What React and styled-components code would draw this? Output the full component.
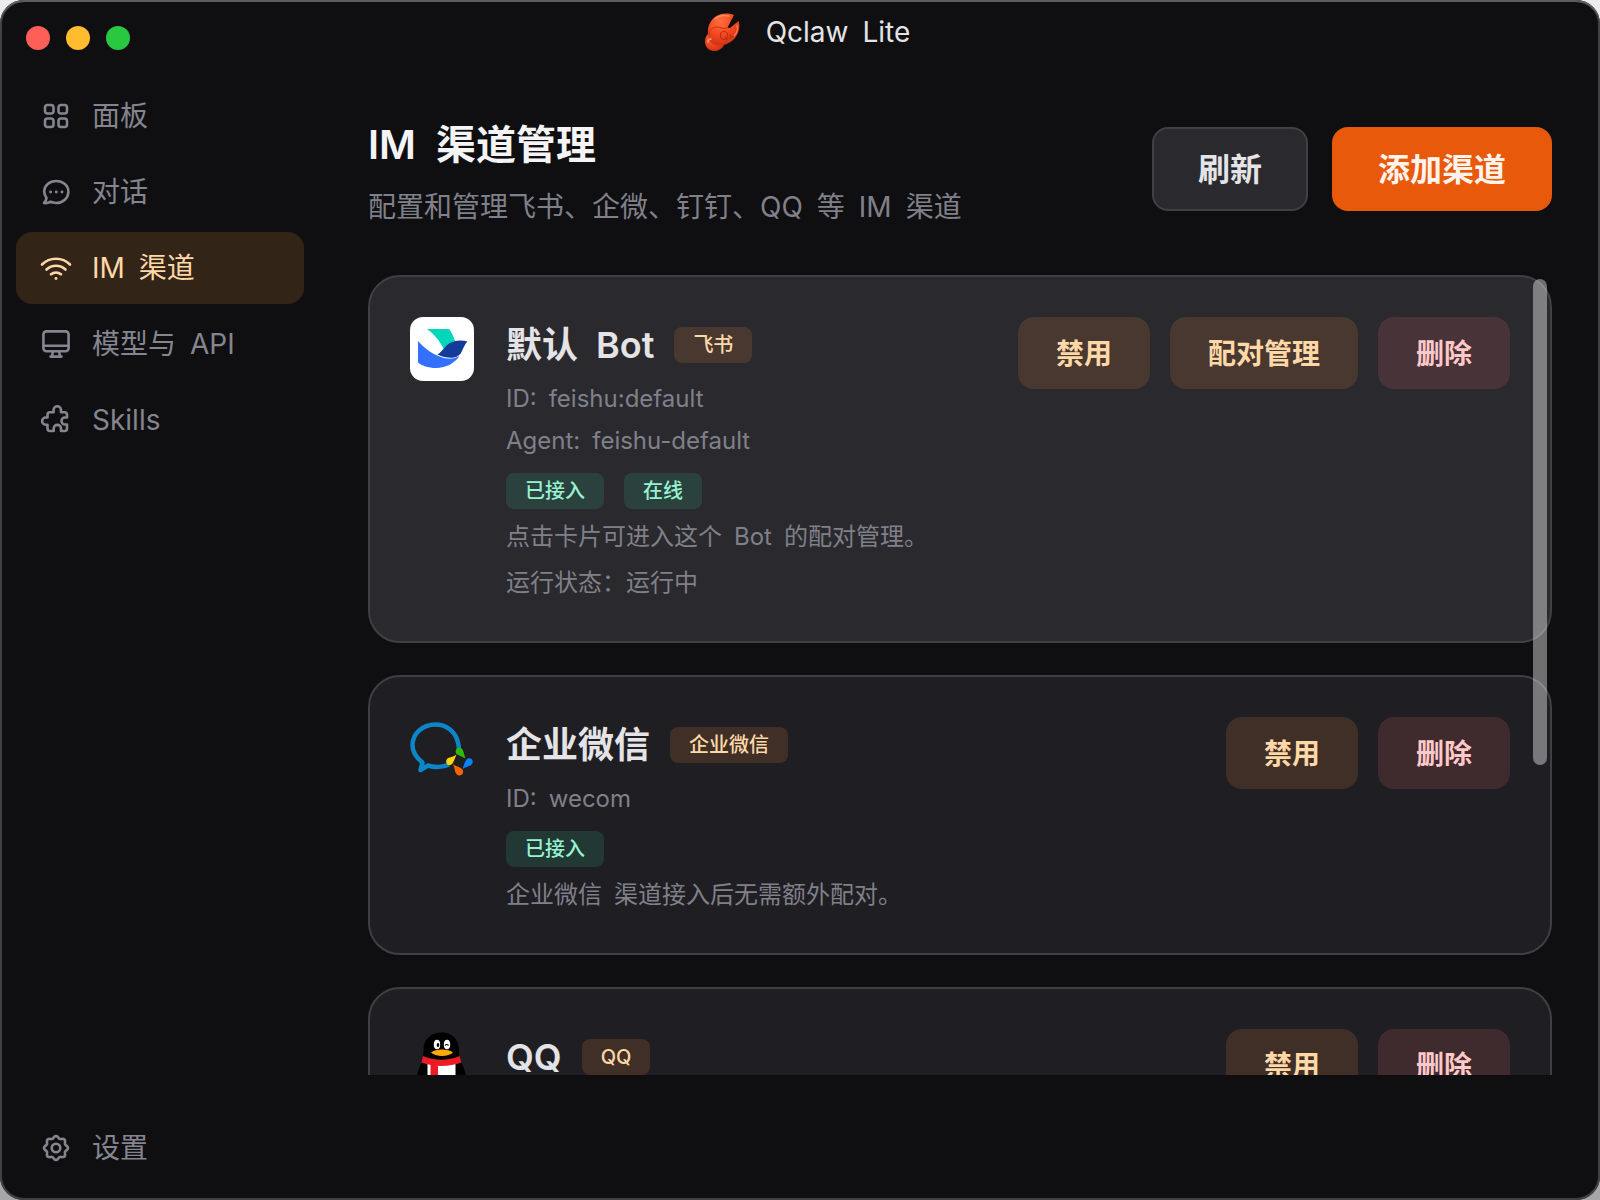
import styled, { createGlobalStyle } from "styled-components";

const GridIcon = () => (
    <>
        <rect x="5" y="5" width="8.500" height="8.500" rx="2.500" />
        <rect x="18.500" y="5" width="8.500" height="8.500" rx="2.500" />
        <rect x="5" y="18.500" width="8.500" height="8.500" rx="2.500" />
        <rect x="18.500" y="18.500" width="8.500" height="8.500" rx="2.500" />
    </>
);

const ChatIcon = () => (
    <>
        <path d="M6.500 22C5 20 4.200 18 4.200 15.500C4.200 9.500 9.500 5 16.300 5C23 5 28.400 9.500 28.400 15.800C28.400 22 23 27 16.300 27C14 27 12 26.500 10.500 25.700C9 26.700 6.500 27.300 4 27C5.500 25.500 6.300 24 6.500 22Z" />
        <path d="M10.500 16H10.600M16.200 16H16.300M21.900 16H22" strokeWidth="2.800" />
    </>
);

const WifiIcon = () => (
    <>
        <path d="M2 12.500A20 20 0 0 1 30 12.500" />
        <path d="M6.500 17.500A14 14 0 0 1 25.500 17.500" />
        <path d="M11 22.300A8 8 0 0 1 21 22.300" />
        <circle cx="16" cy="26.500" r="1.400" fill="currentColor" stroke="none" />
    </>
);

const DesktopIcon = () => (
    <>
        <rect x="3.400" y="3.400" width="25.200" height="19.800" rx="3" />
        <path d="M3.400 17.800H28.600M13 23.500L12 28M19 23.500L20 28M10.500 28.600H21.500" />
    </>
);

const PuzzleIcon = () => (
    <path d="M7.500 10.700Q7.500 8.200 10 8.200H13.600V6A3.700 3.700 0 0 1 21 6V8.200H24.500Q27 8.200 27 10.700V13.500H25A3.500 3.500 0 0 0 25 20.500H27V24.500Q27 27 24.500 27H21V24.500A3.650 3.650 0 0 0 13.700 24.500V27H10Q7.500 27 7.500 24.500V20.700H5.700A3.600 3.600 0 0 1 5.700 13.500H7.500Z" />
);

// eight rounded teeth around the hub
const gearPoints = Array.from({ length: 96 }, (_, i) => {
    const angle = (i / 96) * Math.PI * 2;
    const radius = 10.9 + 1.1 * Math.cos(angle * 8);
    return `${(16 + radius * Math.cos(angle)).toFixed(2)},${(16 + radius * Math.sin(angle)).toFixed(2)}`;
}).join(" ");

const GearIcon = () => (
    <>
        <polygon points={gearPoints} />
        <circle cx="16" cy="16" r="4.300" />
    </>
);

const NavIcon = ({ children }) => (
    <svg
        width="32"
        height="32"
        viewBox="0 0 32 32"
        fill="none"
        stroke="currentColor"
        strokeWidth="2.600"
        strokeLinecap="round"
        strokeLinejoin="round"
        aria-hidden="true"
    >
        {children}
    </svg>
);

// \u2002 is the wide gap between Latin and Chinese words
const navItems = [
    { icon: GridIcon, label: "面板" },
    { icon: ChatIcon, label: "对话" },
    { icon: WifiIcon, label: "IM\u2002渠道", active: true },
    { icon: DesktopIcon, label: "模型与\u2002API" },
    { icon: PuzzleIcon, label: "Skills" },
];

const ClawIcon = () => (
    <svg width="56" height="56" viewBox="0 0 56 56" aria-hidden="true">
        <defs>
            <radialGradient id="claw" cx="0.4" cy="0.25" r="0.85">
                <stop offset="0" stopColor="#ff7040" />
                <stop offset="0.5" stopColor="#f4481f" />
                <stop offset="1" stopColor="#c42c12" />
            </radialGradient>
        </defs>
        <path
            d="M21 28C17 30 15 33 15 38C15 43 19 47 24 47C28 47 32 45 34 41Z"
            fill="url(#claw)"
        />
        <path
            d="M44 11C39 8.500 30 9 25 13C20 17 17.500 23 18 29C18 35 20 39 25 41C31 43 40 40 45 34C49 29 50.500 22 48.500 17L40 24L37.500 23.500Z"
            fill="url(#claw)"
        />
        <path d="M25 15C29 11 34 11 39 12" stroke="#ffa27c" strokeWidth="1.500" fill="none" strokeLinecap="round" opacity="0.7" />
        <path d="M19 31C19 26 23 23 27 23C31 23 33 26 37.500 23.500" stroke="#c9330f" strokeWidth="1" fill="none" />
        <path d="M47 21C48 25 47 29 44 32" stroke="#ff7d50" strokeWidth="1.200" fill="none" strokeLinecap="round" />
        <ellipse cx="34" cy="31.500" rx="3.600" ry="4" fill="none" stroke="#b8300f" strokeWidth="1.100" />
        <path d="M35 33L37.500 36M40.500 30L40 34L43.500 32" stroke="#b8300f" strokeWidth="1.100" fill="none" />
        <path d="M18 38C18 36 19 35 21 35" stroke="#ffa27c" strokeWidth="1.500" fill="none" strokeLinecap="round" />
    </svg>
);

const FeishuLogo = () => (
    <svg width="64" height="64" viewBox="0 0 64 64" aria-hidden="true">
        <rect width="64" height="64" rx="13" fill="#fff" />
        <path d="M17 12H38.500C40 12 43 18 45.500 25C41 25.500 37.500 29 34 32.500C30 24 24 17 17 12Z" fill="#00d6b9" />
        <path d="M8 24C14 31 22 37 31 40C38 42.500 44 42 49.500 39C45 46 36 51 26 51C18 51 11.500 48.500 8 45.500Z" fill="#3370ff" />
        <path d="M27.500 37.500C31 35.500 33 32 37 28C42 24 50 22.500 57.500 24.500C54.500 27.500 53.500 31 51.500 35C48 42 38 42.500 27.500 37.500Z" fill="#133c9a" />
    </svg>
);

const WecomLogo = () => (
    <svg width="64" height="64" viewBox="0 0 64 64" aria-hidden="true">
        <path
            d="M48.500 35C49 32 49 29 48 25.500C45.500 14 36 7.500 25.500 7.500C12 7.500 2.500 17 2.500 28.500C2.500 34.500 5.500 40 12.500 45.500L10.500 53L18 48.500C24 50.500 33 50.500 39 47.500"
            fill="none"
            stroke="#0d86c7"
            strokeWidth="4.500"
            strokeLinejoin="round"
        />
        <path d="M46 33C47 30.500 51 30 52.500 32.500C54 35 54 38 55.500 41.500C52 39.500 48.500 38.500 46.500 37C45.500 36 45.500 34 46 33Z" fill="#2dbc0c" />
        <path d="M61.500 42C63.500 43.500 63 47 60.500 48.500C58 49.500 55.500 50 52.500 52C54 48.500 54.500 45 56.500 42.500C58 41 60.500 41 61.500 42Z" fill="#0a82f5" />
        <path d="M52.500 57C51 59 47.500 59 46 56.500C44.500 54 45 51 43 47.500C46.500 49.500 50 50 52 52C53.500 53.500 53.500 55.500 52.500 57Z" fill="#fb6500" />
        <path d="M37 47C35.500 45 36 42 38.500 41C41 40 44 39.500 46.500 37.500C45 41 44 44 42.500 46.500C41 48.500 38 48.500 37 47Z" fill="#fbd60d" />
    </svg>
);

const QQLogo = () => (
    <svg width="64" height="64" viewBox="0 0 64 64" aria-hidden="true">
        <ellipse cx="23" cy="59" rx="10" ry="4" fill="#fbaa09" />
        <ellipse cx="41" cy="59" rx="10" ry="4" fill="#fbaa09" />
        <path d="M31.500 3.500C42 3.500 49 10 49 21C49 27 50 31 52 35C55 41 57 48 55 51C54 52 52 50 50 47C49 54 42 60 31.500 60C21 60 14 54 13 47C11 50 9 52 8 51C6 48 8 41 11 35C13 31 13.500 27 13.500 21C13.500 10 21 3.500 31.500 3.500Z" fill="#000" />
        <path d="M17.500 34H45.500V46C45.500 53 40 57 31.500 57C23 57 17.500 53 17.500 46Z" fill="#fff" />
        <path d="M13 27C25 32 38 32 49.500 27L51.500 33.500C39 38 24 38 11.500 33.500Z" fill="#eb1c26" />
        <path d="M20.500 35L28 36.500V46H20.500Z" fill="#eb1c26" />
        <ellipse cx="27" cy="15.500" rx="3.200" ry="4.800" fill="#fff" />
        <ellipse cx="37" cy="15.500" rx="3.200" ry="4.800" fill="#fff" />
        <ellipse cx="28" cy="16" rx="1.300" ry="2" fill="#000" />
        <path d="M35 16.500Q36.500 14.500 38.500 16.500" stroke="#000" strokeWidth="1.200" fill="none" />
        <path d="M21 23.500C25 19.500 39 19.500 43 23.500C39 28 25 28 21 23.500Z" fill="#fbaa09" />
    </svg>
);

const channels = [
    {
        logo: FeishuLogo,
        name: "默认\u2002Bot",
        type: "飞书",
        meta: ["ID:\u2002feishu:default", "Agent:\u2002feishu-default"],
        status: ["已接入", "在线"],
        notes: ["点击卡片可进入这个\u2002Bot\u2002的配对管理。", "运行状态：运行中"],
        pairing: true,
        highlighted: true,
    },
    {
        logo: WecomLogo,
        name: "企业微信",
        type: "企业微信",
        meta: ["ID:\u2002wecom"],
        status: ["已接入"],
        notes: ["企业微信\u2002渠道接入后无需额外配对。"],
    },
    {
        logo: QQLogo,
        name: "QQ",
        type: "QQ",
        meta: [],
        status: [],
        notes: [],
    },
];

const ChannelCard = ({ channel }) => {
    const Logo = channel.logo;
    return (
        <Card $highlighted={channel.highlighted}>
            <Logo />
            <CardBody>
                <CardTitleRow>
                    <CardTitle>{channel.name}</CardTitle>
                    <Badge $tone="orange">{channel.type}</Badge>
                </CardTitleRow>
                <MetaList>
                    {channel.meta.map((line) => (
                        <MetaLine key={line}>{line}</MetaLine>
                    ))}
                </MetaList>
                <BadgeRow>
                    {channel.status.map((s) => (
                        <Badge key={s} $tone="green">{s}</Badge>
                    ))}
                </BadgeRow>
                <NoteList>
                    {channel.notes.map((line) => (
                        <MetaLine key={line}>{line}</MetaLine>
                    ))}
                </NoteList>
            </CardBody>
            <CardActions>
                <CardButton type="button" $tone="orange">禁用</CardButton>
                {channel.pairing && <CardButton type="button" $tone="orange">配对管理</CardButton>}
                <CardButton type="button" $tone="red">删除</CardButton>
            </CardActions>
        </Card>
    );
};

const App = () => {
    return (
        <>
            <GlobalStyle />
            <Window>
                <TitleBar>
                    <Lights>
                        <Light type="button" aria-label="关闭" $color="#ff5f57" />
                        <Light type="button" aria-label="最小化" $color="#febc2e" />
                        <Light type="button" aria-label="缩放" $color="#28c840" />
                    </Lights>
                    <AppName>
                        <ClawIcon />
                        {"Qclaw\u2002Lite"}
                    </AppName>
                </TitleBar>
                <Body>
                    <Sidebar>
                        {navItems.map(({ icon: Icon, label, active }) => (
                            <NavItem key={label} href="#" $active={active}>
                                <NavIcon><Icon /></NavIcon>
                                {label}
                            </NavItem>
                        ))}
                        <Spacer />
                        <NavItem href="#">
                            <NavIcon><GearIcon /></NavIcon>
                            设置
                        </NavItem>
                    </Sidebar>
                    <Main>
                        <Header>
                            <div>
                                <PageTitle>{"IM\u2002渠道管理"}</PageTitle>
                                <Subtitle>{"配置和管理飞书、企微、钉钉、QQ\u2002等\u2002IM\u2002渠道"}</Subtitle>
                            </div>
                            <HeaderActions>
                                <HeaderButton type="button">刷新</HeaderButton>
                                <HeaderButton type="button" $primary>添加渠道</HeaderButton>
                            </HeaderActions>
                        </Header>
                        <ListArea>
                            <List>
                                {channels.map((channel) => (
                                    <ChannelCard key={channel.name} channel={channel} />
                                ))}
                            </List>
                            <ScrollThumb />
                        </ListArea>
                    </Main>
                </Body>
            </Window>
        </>
    );
};

const tones = {
    orange: { bg: "rgba(251, 146, 60, 0.15)", text: "#ffd8a8" },
    green: { bg: "rgba(52, 211, 153, 0.15)", text: "#96f2d0" },
    red: { bg: "rgba(248, 113, 113, 0.15)", text: "#ffc9c9" },
};

const GlobalStyle = createGlobalStyle`
    * {
        box-sizing: border-box;
    }
    body {
        margin: 0;
        background: linear-gradient(#ececec, #a6a6a6);
        font-family: Inter, "Noto Sans CJK SC", sans-serif;
    }
    button {
        font-family: inherit;
        white-space: nowrap;
        cursor: pointer;
    }
    h1, h2, p {
        margin: 0;
    }
`;
const Window = styled.div`
    display: flex;
    flex-direction: column;
    height: 100vh;
    border-radius: 24px;
    background-color: #0f0f11;
    box-shadow: inset 0 2px 0 #5c5c5e, inset 0 0 0 2px #404042;
    overflow: hidden;
`;
const TitleBar = styled.header`
    display: grid;
    grid-template-columns: 1fr auto 1fr;
    align-items: center;
    height: 64px;
    padding: 0 26px;
`;
const Lights = styled.div`
    display: flex;
    gap: 16px;
    padding-top: 12px;
`;
const Light = styled.button`
    width: 24px;
    height: 24px;
    padding: 0;
    border: none;
    border-radius: 50%;
    background-color: ${({ $color }) => $color};
`;
const AppName = styled.div`
    display: flex;
    align-items: center;
    gap: 20px;
    color: #e4e4e7;
    font-size: 28px;
    line-height: 40px;
`;
const Body = styled.div`
    flex: 1;
    display: flex;
    min-height: 0;
`;
const Sidebar = styled.nav`
    display: flex;
    flex-direction: column;
    gap: 4px;
    width: 320px;
    padding: 16px;
`;
const NavItem = styled.a`
    display: flex;
    align-items: center;
    gap: 20px;
    height: 72px;
    padding: 0 24px;
    border-radius: 16px;
    font-size: 28px;
    line-height: 42px;
    text-decoration: none;
    color: ${({ $active }) => ($active ? "#ffd8a8" : "#85858f")};
    background-color: ${({ $active }) => ($active ? "#332418" : "transparent")};
`;
const Spacer = styled.div`
    flex: 1;
`;
const Main = styled.main`
    flex: 1;
    display: flex;
    flex-direction: column;
    min-width: 0;
    padding: 55px 48px 125px;
`;
const Header = styled.div`
    display: flex;
    justify-content: space-between;
    align-items: flex-start;
    margin-bottom: 47px;
`;
const PageTitle = styled.h1`
    color: #f4f4f5;
    font-size: 40px;
    font-weight: 600;
    line-height: 52px;
`;
const Subtitle = styled.p`
    margin-top: 15px;
    color: #80808a;
    font-size: 28px;
    line-height: 42px;
`;
const HeaderActions = styled.div`
    display: flex;
    gap: 24px;
    padding-top: 8px;
`;
const HeaderButton = styled.button`
    height: 84px;
    padding: 0 44px 4px;
    border: 2px solid ${({ $primary }) => ($primary ? "#e8590c" : "#3f3f46")};
    border-radius: 16px;
    background-color: ${({ $primary }) => ($primary ? "#e8590c" : "#2a292e")};
    color: ${({ $primary }) => ($primary ? "#fff4ec" : "#e4e4e7")};
    font-size: 32px;
    font-weight: 600;
`;
const ListArea = styled.div`
    position: relative;
    flex: 1;
    min-height: 0;
`;
const List = styled.div`
    display: flex;
    flex-direction: column;
    gap: 32px;
    height: 100%;
    overflow: hidden;
`;
const ScrollThumb = styled.div`
    position: absolute;
    top: 4px;
    right: 5px;
    width: 14px;
    height: 486px;
    border-radius: 7px;
    background-color: rgba(255, 255, 255, 0.4);
`;
const Card = styled.article`
    display: flex;
    align-items: flex-start;
    flex-shrink: 0;
    gap: 32px;
    padding: 40px;
    border: 2px solid #3f3f46;
    border-radius: 32px;
    background-color: ${({ $highlighted }) => ($highlighted ? "#2a292e" : "#1f1e23")};
`;
const CardBody = styled.div`
    flex: 1;
    min-width: 0;
`;
const CardTitleRow = styled.div`
    display: flex;
    align-items: center;
    gap: 20px;
    height: 56px;
    margin-bottom: 8px;
`;
const CardTitle = styled.h2`
    color: #e4e4e7;
    font-size: 36px;
    font-weight: 600;
    line-height: 56px;
`;
const MetaList = styled.div`
    display: grid;
    gap: 6px;
`;
const MetaLine = styled.p`
    color: #80808a;
    font-size: 24px;
    line-height: 36px;
`;
const BadgeRow = styled.div`
    display: flex;
    gap: 20px;
    margin-top: 14px;
`;
const Badge = styled.span`
    padding: 0 19px;
    border-radius: 8px;
    background-color: ${({ $tone }) => tones[$tone].bg};
    color: ${({ $tone }) => tones[$tone].text};
    font-size: 20px;
    font-weight: 500;
    line-height: 36px;
`;
const NoteList = styled.div`
    display: grid;
    gap: 10px;
    margin-top: 10px;
`;
const CardActions = styled.div`
    display: flex;
    gap: 20px;
`;
const CardButton = styled.button`
    height: 72px;
    padding: 0 38px 2px;
    border: none;
    border-radius: 16px;
    background-color: ${({ $tone }) => tones[$tone].bg};
    color: ${({ $tone }) => tones[$tone].text};
    font-size: 28px;
    font-weight: 600;
`;
export default App;
